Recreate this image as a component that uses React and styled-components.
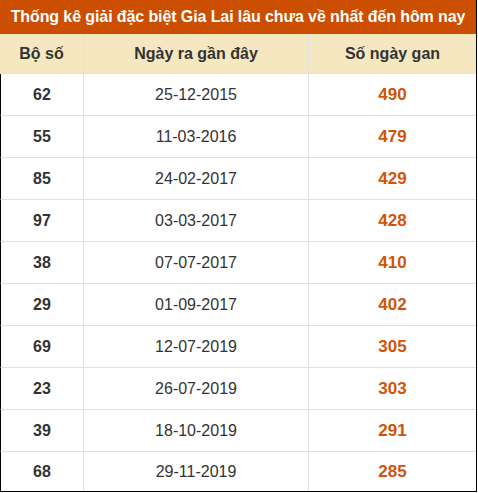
import React from "react";
import styled, { createGlobalStyle } from "styled-components";

const Global = createGlobalStyle`
  html, body { margin: 0; padding: 0; background: #fff; }
  body { font-family: "Liberation Sans", Arial, sans-serif; }
`;

const Table = styled.div`
  width: 476px;
  border-right: 1px solid #000;
  border-bottom: 1px solid #000;
  display: flex;
  flex-direction: column;
`;

const Title = styled.div`
  height: 34px;
  background: #cc4e00;
  color: #fff;
  font-weight: bold;
  font-size: 16px;
  letter-spacing: -0.1px;
  display: flex;
  align-items: center;
  justify-content: center;
  white-space: nowrap;
`;

const Grid = styled.div`
  display: grid;
  grid-template-columns: 83px 225px 1fr;
`;

const HeadCell = styled.div`
  height: 40px;
  background: #f5e8c0;
  color: #333;
  font-weight: bold;
  font-size: 16px;
  display: flex;
  align-items: center;
  justify-content: center;
  border-left: ${(p) => (p.$first ? "none" : "1px solid #e0e0e0")};
  border-bottom: 1px solid #e0e0e0;
  box-sizing: border-box;
`;

const Cell = styled.div`
  height: ${(p) => (p.$last ? "39px" : "42px")};
  box-sizing: border-box;
  border-bottom: ${(p) => (p.$last ? "none" : "1px solid #e0e0e0")};
  border-left: ${(p) => (p.$first ? "1px solid #000" : "1px solid #e0e0e0")};
  display: flex;
  align-items: center;
  justify-content: center;
  color: ${(p) => (p.$accent ? "#d0540a" : "#333")};
  font-weight: ${(p) => (p.$bold ? "bold" : "normal")};
  font-size: ${(p) => (p.$accent ? "17px" : "16px")};
`;

const rows = [
  ["62", "25-12-2015", "490"],
  ["55", "11-03-2016", "479"],
  ["85", "24-02-2017", "429"],
  ["97", "03-03-2017", "428"],
  ["38", "07-07-2017", "410"],
  ["29", "01-09-2017", "402"],
  ["69", "12-07-2019", "305"],
  ["23", "26-07-2019", "303"],
  ["39", "18-10-2019", "291"],
  ["68", "29-11-2019", "285"],
];

export default function App() {
  return (
    <>
      <Global />
      <Table>
        <Title>Thống kê giải đặc biệt Gia Lai lâu chưa về nhất đến hôm nay</Title>
        <Grid>
          <HeadCell $first>Bộ số</HeadCell>
          <HeadCell>Ngày ra gần đây</HeadCell>
          <HeadCell>Số ngày gan</HeadCell>
          {rows.map((r, i) => {
            const last = i === rows.length - 1;
            return (
              <React.Fragment key={r[0]}>
                <Cell $first $bold $last={last}>{r[0]}</Cell>
                <Cell $last={last}>{r[1]}</Cell>
                <Cell $bold $accent $last={last}>{r[2]}</Cell>
              </React.Fragment>
            );
          })}
        </Grid>
      </Table>
    </>
  );
}
